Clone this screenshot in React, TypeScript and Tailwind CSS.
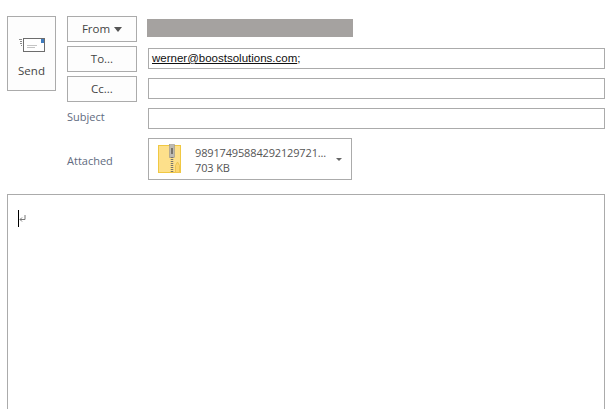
function EnvelopeIcon() {
  return (
    <svg width="28" height="16" viewBox="0 0 28 16" className="block">
      <path d="M1 1.500h3M2 3.500h2M2 5.500h2M3 7.500h1" stroke="#8a8a8a" strokeWidth="1" fill="none" />
      <rect x="5.500" y="0.500" width="21" height="13" fill="#fff" stroke="#6d6d6d" />
      <rect x="23" y="1" width="3" height="4" fill="#3f7cbf" />
      <path d="M9 9.500h8M9 7.500h10" stroke="#c4c4c4" fill="none" />
    </svg>
  );
}

function ZipIcon() {
  return (
    <svg width="24" height="30" viewBox="0 0 24 30" className="block shrink-0">
      <rect x="0.500" y="1.500" width="22" height="27" fill="#fde08b" stroke="#f0c843" />
      <path d="M17.500 28.500v-7l2-3.500 2 3.500v7z" fill="#fbd670" stroke="#eec552" />
      <rect x="11.500" y="0.500" width="5" height="13" fill="#bdbab3" stroke="#8f8c86" strokeWidth="0.500" />
      <rect x="13" y="4" width="2" height="6" fill="#77736c" />
      <path d="M14 13v15" stroke="#77736c" strokeWidth="2.500" strokeDasharray="1 1" />
    </svg>
  );
}

function HeaderButton({ label, caret }: { label: string; caret?: boolean }) {
  return (
    <button className="flex h-[26px] w-[70px] items-center justify-center gap-[4px] border border-[#ababab] bg-[#fdfdfd] text-[11.500px] text-[#444]">
      {label}
      {caret && <span className="mt-[1px] h-0 w-0 border-x-[4.500px] border-t-[5px] border-x-transparent border-t-[#555]" />}
    </button>
  );
}

function FieldInput({ children }: { children?: React.ReactNode }) {
  return (
    <div className="ml-[11px] mt-[2px] flex h-[21px] w-[457px] items-center border border-[#ababab] bg-white px-[3px]">
      {children}
    </div>
  );
}

export default function App() {
  return (
    <div
      className="h-[409px] w-[612px] overflow-hidden bg-white pl-[7px] pt-[16px] text-[#444]"
      style={{ fontFamily: '"Open Sans", "Noto Sans", sans-serif' }}
    >
      <div className="flex">
        <button className="flex h-[75px] w-[49px] flex-col items-center border border-[#ababab] bg-[#fdfdfd] pt-[21px] text-[11.500px] text-[#444]">
          <EnvelopeIcon />
          <span className="mt-[8px]">Send</span>
        </button>

        <div className="ml-[11px] flex flex-col">
          <div className="flex h-[30px] items-start">
            <HeaderButton label="From" caret />
            <div className="ml-[10px] mt-[3px] h-[18px] w-[206px] bg-[#a5a2a0]" />
          </div>
          <div className="flex h-[30px] items-start">
            <HeaderButton label="To..." />
            <FieldInput>
              <span className="font-['Liberation_Sans',sans-serif] text-[11.500px] text-[#111]">
                <span className="underline">werner@boostsolutions.com</span>;
              </span>
            </FieldInput>
          </div>
          <div className="flex h-[30px] items-start">
            <HeaderButton label="Cc..." />
            <FieldInput />
          </div>
          <div className="flex h-[30px] items-start">
            <span className="mt-[3px] w-[70px] text-[11px] text-[#5f6b80]">Subject</span>
            <FieldInput />
          </div>
          <div className="mt-[2px] flex items-start">
            <span className="mt-[15px] w-[81px] text-[11px] text-[#5f6b80]">Attached</span>
            <div className="flex h-[42px] w-[204px] items-center border border-[#ababab] bg-white pl-[9px]">
              <ZipIcon />
              <div className="ml-[13px] mt-[2px] flex w-[141px] flex-col text-[11px] leading-[15px] tracking-[-0.15px] text-[#555]">
                <span className="whitespace-nowrap">98917495884292129721...</span>
                <span>703 KB</span>
              </div>
              <span className="h-0 w-0 border-x-[3px] border-t-[3px] border-x-transparent border-t-[#666]" />
            </div>
          </div>
        </div>
      </div>

      <div className="mt-[14px] h-[240px] w-[598px] border border-b-0 border-[#ababab] bg-white pl-[10px] pt-[15px]">
        <div className="flex items-center">
          <span className="h-[17px] w-px bg-black" />
          <svg width="7" height="8" viewBox="0 0 7 8" className="mt-[1px] block">
            <path d="M6 0v4.500H1M3 2.500 1 4.500l2 2" stroke="#777" fill="none" />
          </svg>
        </div>
      </div>
    </div>
  );
}
